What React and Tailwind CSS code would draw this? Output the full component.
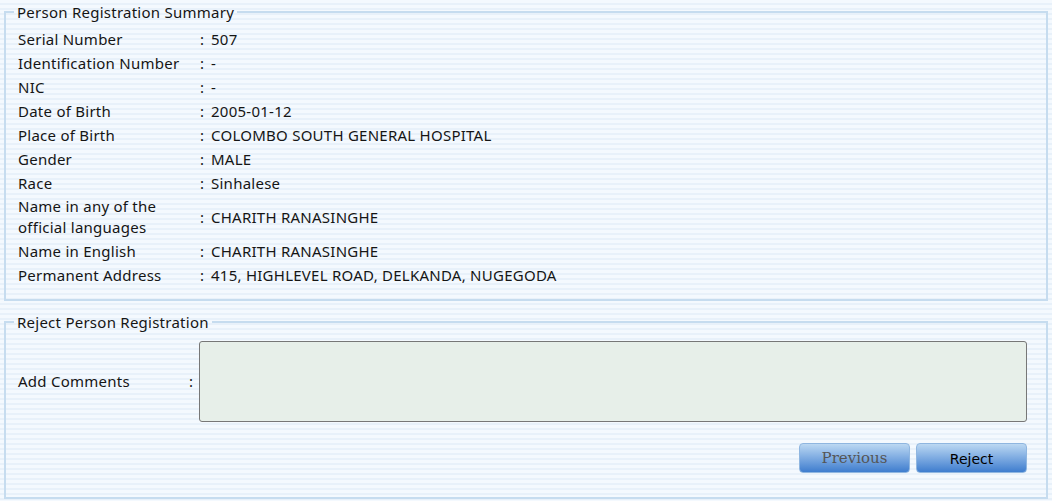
const rows = [
  ['Serial Number', '507'],
  ['Identification Number', '-'],
  ['NIC', '-'],
  ['Date of Birth', '2005-01-12'],
  ['Place of Birth', 'COLOMBO SOUTH GENERAL HOSPITAL'],
  ['Gender', 'MALE'],
  ['Race', 'Sinhalese'],
  ['Name in any of the official languages', 'CHARITH RANASINGHE', true],
  ['Name in English', 'CHARITH RANASINGHE'],
  ['Permanent Address', '415, HIGHLEVEL ROAD, DELKANDA, NUGEGODA'],
];

function Row({ label, value, wrap }) {
  return (
    <div className={`flex items-center ${wrap ? 'h-[44px]' : 'h-[24px]'}`}>
      <div className="w-[182px] shrink-0 pr-[20px] leading-[21px]">{label}</div>
      <div className="w-[11px] shrink-0">:</div>
      <div>{value}</div>
    </div>
  );
}

export default function App() {
  return (
    <div
      className="w-[1052px] h-[501px] overflow-hidden text-[15px] tracking-[0.25px] text-[#151515] bg-[repeating-linear-gradient(180deg,#f4f9fe_0px,#f4f9fe_3px,#e8f1fa_3px,#e8f1fa_5px)]"
      style={{ fontFamily: '"Noto Sans", sans-serif' }}
    >
      <fieldset className="mx-[4px] mt-[3px] border-2 border-[#c6dcef] pl-[12px] pr-3 pt-[6px] pb-[12px]">
        <legend className="ml-[-4px] px-[3px] leading-[18px]">Person Registration Summary</legend>
        {rows.map(([l, v, w]) => (
          <Row key={l} label={l} value={v} wrap={w} />
        ))}
      </fieldset>

      <fieldset className="mx-[4px] mt-[12px] border-2 border-[#c6dcef] pl-[12px] pr-[19px] pt-[10px] pb-[24px]">
        <legend className="ml-[-4px] px-[3px] leading-[18px]">Reject Person Registration</legend>
        <div className="flex items-center">
          <div className="w-[171px] shrink-0">Add Comments</div>
          <div className="w-[10px] shrink-0">:</div>
          <textarea className="h-[81px] flex-1 resize-none rounded-[3px] border border-[#777] bg-[#e7efe9]" />
        </div>
        <div className="mt-[21px] flex justify-end gap-[6px]">
          <button
            className="h-[30px] w-[111px] rounded-[4px] border border-[#8fb6e0] bg-gradient-to-b from-[#bcd8f2] to-[#3e7dce] text-[15px] tracking-normal text-[#555]"
            style={{ fontFamily: '"DejaVu Serif", serif' }}
          >
            Previous
          </button>
          <button
            className="h-[30px] w-[111px] rounded-[4px] border border-[#8fb6e0] bg-gradient-to-b from-[#bcd8f2] to-[#3e7dce] pt-[3px] text-[14px] tracking-normal text-black"
            style={{ fontFamily: '"DejaVu Sans", sans-serif' }}
          >
            Reject
          </button>
        </div>
      </fieldset>
    </div>
  );
}
